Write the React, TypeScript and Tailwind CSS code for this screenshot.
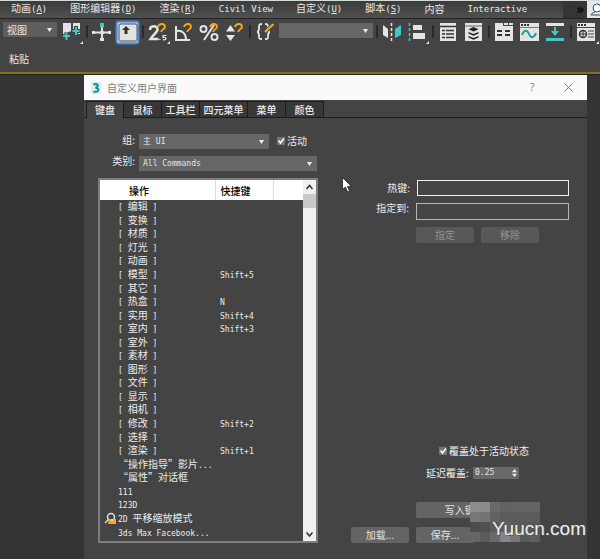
import type { ReactNode } from "react";

const CJK = "font-['Noto_Sans_CJK_SC',sans-serif]";
const MONO = "font-['DejaVu_Sans_Mono','Noto_Sans_CJK_SC',monospace]";

/** Chinese runs keep the surrounding size, Latin runs are set in a smaller monospace. */
function Mixed({ text, large = false }: { text: string; large?: boolean }) {
  const runs = text.split(/([\x20-\x7e]+)/).filter(Boolean);
  return (
    <>
      {runs.map((run, i) =>
        /^[\x20-\x7e]/.test(run) ? (
          <span key={i} className={`${MONO} whitespace-pre ${large ? "text-[9px]" : "text-[8px]"}`}>
            {run}
          </span>
        ) : (
          <span key={i}>{run}</span>
        ),
      )}
    </>
  );
}

const menus: { label: string; key?: string }[] = [
  { label: "动画", key: "A" },
  { label: "图形编辑器", key: "D" },
  { label: "渲染", key: "R" },
  { label: "Civil View" },
  { label: "自定义", key: "U" },
  { label: "脚本", key: "S" },
  { label: "内容" },
  { label: "Interactive" },
];

const commands: [string, string][] = [
  ["[ 编辑 ]", ""],
  ["[ 变换 ]", ""],
  ["[ 材质 ]", ""],
  ["[ 灯光 ]", ""],
  ["[ 动画 ]", ""],
  ["[ 模型 ]", "Shift+5"],
  ["[ 其它 ]", ""],
  ["[ 热盒 ]", "N"],
  ["[ 实用 ]", "Shift+4"],
  ["[ 室内 ]", "Shift+3"],
  ["[ 室外 ]", ""],
  ["[ 素材 ]", ""],
  ["[ 图形 ]", ""],
  ["[ 文件 ]", ""],
  ["[ 显示 ]", ""],
  ["[ 相机 ]", ""],
  ["[ 修改 ]", "Shift+2"],
  ["[ 选择 ]", ""],
  ["[ 渲染 ]", "Shift+1"],
  ["“操作指导”影片...", ""],
  ["“属性”对话框", ""],
  ["111", ""],
  ["123D", ""],
  ["2D 平移缩放模式", ""],
  ["3ds Max Facebook...", ""],
];

function Dropdown({ label, value, className, id }: { label: string; value: string; className: string; id?: string }) {
  return (
    <div className={`relative h-[15px] shrink-0 ${className}`}>
      <select
        id={id}
        aria-label={label}
        className={`block h-full w-full appearance-none bg-[#666] pl-1 text-[8px] leading-[15px] text-[#e6e6e6] outline-none ${MONO}`}
      >
        <option>{value}</option>
      </select>
      <svg className="pointer-events-none absolute top-[6px] right-[5px]" width="5" height="4" viewBox="0 0 5 4">
        <path d="M0 0h5L2.5 4z" fill="#eee" />
      </svg>
    </div>
  );
}

/* Toolbar drawings share one coordinate space; each tool shows its own slice of it. */
function Tool({ from, to, name, children }: { from: number; to: number; name: string; children: ReactNode }) {
  return (
    <button type="button" aria-label={name} className="block shrink-0">
      <svg width={to - from} height="28" viewBox={`${from} 19 ${to - from} 28`}>
        {children}
      </svg>
    </button>
  );
}

const L = "#e4e4e4";
const C = "#3fc8c6";
const O = "#f5a81c";
const Magnet = ({ x, y }: { x: number; y: number }) => (
  <path d={`M${x} ${y + 3}C${x + 1} ${y - 1} ${x + 7} ${y - 1} ${x + 7} ${y + 3}C${x + 7} ${y + 5} ${x + 4} ${y + 5} ${x + 3} ${y + 8}`} fill="none" stroke={O} strokeWidth="1.8" />
);
const Sep = ({ x }: { x: number }) => <path d={`M${x} 25v13`} stroke="#222" strokeWidth="1.5" />;

function Toolbar() {
  return (
    <div className="flex h-[28px] items-center overflow-hidden pl-[3px]">
      <div className="relative mt-[3px] h-[15px] w-[54px] shrink-0 self-start">
        <select aria-label="参考坐标系" className={`block h-full w-full appearance-none bg-[#5e5e5e] pl-1 text-[10px] leading-[15px] text-[#e6e6e6] ${CJK}`}>
          <option>视图</option>
        </select>
        <svg className="pointer-events-none absolute top-[6px] right-[5px]" width="5" height="4" viewBox="0 0 5 4">
          <path d="M0 0h5L2.5 4z" fill="#eee" />
        </svg>
      </div>
      <Tool from={57} to={89} name="轴心">
        <path d="M63 23h8v8l-4 2v4h-4zM73 23h7v11h-3l-4-5z" fill={L} />
        <path d="M66.500 32v8M63 36h7M76 26v9M72 31h8" stroke="#444" strokeWidth="4" />
        <path d="M66.500 32v8M63 36h7M76 27v8M72.500 31h7" stroke={C} strokeWidth="2" />
        <path d="M83 41v3h-3z" fill={L} />
        <Sep x={87} />
      </Tool>
      <Tool from={89} to={114} name="操纵">
        <path d="M102 26v15M93 32.500h18" stroke={L} strokeWidth="2" />
        <path d="M100 23h4v4h-4z" fill={C} />
        <path d="M99 32.500l3-3 3 3-3 3zM92 31h3v3h-3zM108 31h3v3h-3zM100 38h4v3h-4z" fill={L} />
      </Tool>
      <Tool from={114} to={146} name="键盘快捷键覆盖">
        <rect x="116.500" y="21.500" width="22" height="22" rx="2" fill="#bdd2ea" stroke="#4a86cf" strokeWidth="2" />
        <rect x="119" y="24" width="18" height="17" rx="2" fill="#e2e2e2" stroke="#555" />
        <path d="M122 30l4-4 4 4h-2.500v4h-3v-4z" fill="#333" />
        <Sep x={143} />
      </Tool>
      <Tool from={146} to={172} name="捕捉开关">
        <path d="M150 30c0-5 7.500-5 7.500-.5 0 3-5 5.500-7 9.500h8" fill="none" stroke={L} strokeWidth="2.500" />
        <Magnet x={158} y={24} />
        <path d="M159 39.500h1.500M166.500 35.500h-3.500v2c4-1 4 3 0 2.200" fill="none" stroke={L} strokeWidth="1.200" />
        <path d="M170 41v3h-3z" fill={L} />
      </Tool>
      <Tool from={172} to={196} name="角度捕捉">
        <path d="M176 26v14h14M176 31c7-1 10 3 10 9" fill="none" stroke={L} strokeWidth="2" />
        <Magnet x={184} y={24} />
      </Tool>
      <Tool from={196} to={223} name="百分比捕捉">
        <path d="M214 25l-10 15" stroke={L} strokeWidth="2" />
        <circle cx="203.500" cy="29" r="3" fill="none" stroke={L} strokeWidth="2" />
        <circle cx="214.500" cy="37" r="3" fill="none" stroke={L} strokeWidth="2" />
        <Magnet x={210} y={24} />
      </Tool>
      <Tool from={223} to={253} name="微调器捕捉">
        <path d="M230.500 25l4.500 6.500h-9zM230.500 41l4.500-6h-9z" fill={L} />
        <Magnet x={235} y={24} />
        <Sep x={250} />
      </Tool>
      <Tool from={253} to={279} name="编辑命名选择集">
        <path d="M262 24c-3 0-3 1-3 4 0 2 0 4-2 4 2 0 2 2 2 4 0 3 0 3 3 3M265 24c3 0 3 1 3 4 0 2 0 4 2 4-2 0-2 2-2 4 0 3 0 3-3 3" fill="none" stroke={L} strokeWidth="1.800" />
        <path d="M266 31l8-7" stroke="#444" strokeWidth="4" />
        <path d="M265 32l8.500-8" stroke={O} strokeWidth="2.200" />
      </Tool>
      <div className="mt-[4px] self-start">
        <Dropdown label="命名选择集" value="" className="w-[94px]" />
      </div>
      <Tool from={373} to={405} name="镜像">
        <Sep x={377} />
        <path d="M383 25l5 4v9l-5-3z" fill={L} />
        <path d="M391.500 23v18" stroke={L} strokeWidth="1.500" strokeDasharray="3 2" />
        <path d="M401 25l-6 4v9l6-3z" fill={C} />
      </Tool>
      <Tool from={405} to={436} name="对齐">
        <path d="M409.500 23v18" stroke={C} strokeWidth="1.500" strokeDasharray="3 2" />
        <path d="M413 25h9v5h-9zM413 33h12v6h-12z" fill={L} />
        <path d="M429 41v3h-3z" fill={L} />
        <Sep x={433} />
      </Tool>
      <Tool from={436} to={461} name="场景资源管理器">
        <path d="M440 23h16v18h-16z" fill={L} />
        <path d="M440 26.500h16M442 30.500h3M446 30.500h8M442 34h3M446 34h8M442 37.500h3M446 37.500h8" stroke="#333" strokeWidth="1.500" />
      </Tool>
      <Tool from={461} to={492} name="层资源管理器">
        <path d="M465 23h17v18h-17z" fill={L} />
        <path d="M465 26h17" stroke="#666" />
        <path d="M473.500 27l5 2.200-5 2.300-5-2.300zM468.500 32l5 2 5-2v1.500l-5 2.300-5-2.300zM468.500 36l5 2 5-2v1.500l-5 2.300-5-2.300z" fill="#222" />
        <Sep x={489} />
      </Tool>
      <Tool from={492} to={517} name="显示功能区">
        <path d="M495 23h8v3h10v15h-18zM504 23h4v2h-4zM509 23h4v2h-4z" fill={L} />
        <path d="M497 31h5M505 31h5M497 35h5M505 35h5" stroke="#333" strokeWidth="2" />
      </Tool>
      <Tool from={517} to={543} name="曲线编辑器">
        <path d="M520 23h19v18h-19z" fill={L} />
        <path d="M521 25h8" stroke="#333" strokeWidth="2" strokeDasharray="2 1" />
        <path d="M520 27.500h19" stroke="#777" />
        <path d="M522 35c2-5 5-6 7-1s5 4 7-1" fill="none" stroke="#229b9b" strokeWidth="2" />
      </Tool>
      <Tool from={543} to={574} name="图解视图">
        <path d="M546 23h18v3h-18z" fill={L} />
        <path d="M546 38h18v3h-18zM554 27h2v4h3l-4 5-4-5h3z" fill={C} />
        <Sep x={571} />
      </Tool>
      <Tool from={574} to={600} name="渲染设置">
        <path d="M577 23h18v18h-18z" fill={L} />
        <path d="M578 25h8" stroke="#333" strokeWidth="2" strokeDasharray="2 1" />
        <path d="M577 27.500h18M588 31h6M588 34h6M588 37h6" stroke="#444" />
        <circle cx="583" cy="34" r="3.500" fill="none" stroke="#333" strokeWidth="1.500" />
        <path d="M583 30v8M579 34h8" stroke="#333" />
        <path d="M599 41v3h-3z" fill={L} />
      </Tool>
    </div>
  );
}

function CheckBox({ text }: { text: string }) {
  return (
    <label className="relative flex items-center gap-[2px] text-[10px] leading-[14px] whitespace-nowrap">
      <input type="checkbox" defaultChecked className="size-[8px] appearance-none bg-[#757575]" />
      <svg className="pointer-events-none absolute top-[3px] left-0" width="8" height="8" viewBox="0 0 8 8">
        <path d="M1.500 3.500L3.500 6L7 1.500" fill="none" stroke="#fff" strokeWidth="1.500" />
      </svg>
      {text}
    </label>
  );
}

function PushButton({ children, disabled = false, wide = false }: { children: ReactNode; disabled?: boolean; wide?: boolean }) {
  return (
    <button
      type="button"
      disabled={disabled}
      className={`h-[16px] shrink-0 rounded-[2px] text-[10px] leading-[16px] ${wide ? "w-[124px] pr-[18px]" : "w-[58px]"} ${disabled ? "bg-[#585858] text-[#929292]" : "bg-[#646464] text-[#e2e2e2]"}`}
    >
      {children}
    </button>
  );
}

function CommandList() {
  return (
    <div className="flex h-[365px] w-[220px] items-start border-2 border-[#7c7e82]">
      <table className="h-[359px] flex-1 table-fixed border-collapse text-left text-[10px] whitespace-nowrap">
        <colgroup>
          <col />
          <col className="w-[58px]" />
          <col className="w-[30px]" />
        </colgroup>
        <thead>
          <tr className="h-[20px] bg-white leading-[13px] text-black">
            <th className="border-r border-[#ddd] py-0 pl-[29px] font-medium">操作</th>
            <th className="border-r border-[#ddd] py-0 pl-[5px] font-medium">快捷键</th>
            <th aria-label="图标" className="p-0" />
          </tr>
        </thead>
        <tbody className="leading-[11px]">
          {commands.map(([name, key]) => (
            <tr key={name}>
              <td className="relative p-0 pl-[18px]">
                {name.startsWith("2D") && (
                  <svg className="absolute top-0 left-[4px]" width="14" height="13" viewBox="0 0 14 13">
                    <circle cx="7" cy="5" r="3.500" fill="none" stroke="#ddd" strokeWidth="1.500" />
                    <path d="M1 11l4-4" stroke="#ddd" strokeWidth="1.500" />
                    <path d="M5 7h7v5H4z" fill={O} />
                    <path d="M8 7v2" stroke="#fff" />
                  </svg>
                )}
                <div className="h-[13px]">
                  <Mixed text={name} />
                </div>
              </td>
              <td className="p-0 pl-[5px]">
                <div className="h-[13px]">
                  <Mixed text={key} />
                </div>
              </td>
              <td className="p-0" />
            </tr>
          ))}
        </tbody>
      </table>
      <div className="flex w-[13px] flex-col items-center self-stretch bg-[#f0f0f0]">
        <svg width="13" height="14" viewBox="0 0 13 14">
          <path d="M3.500 9l3-3.500L9.500 9" fill="none" stroke="#333" strokeWidth="1.500" />
        </svg>
        <div className="h-[14px] w-full bg-[#c9c9c9]" />
        <svg className="mt-auto" width="13" height="14" viewBox="0 0 13 14">
          <path d="M3.500 5.500l3 3.500 3-3.500" fill="none" stroke="#333" strokeWidth="1.500" />
        </svg>
      </div>
    </div>
  );
}

const mosaic = [
  "bg-[#8d8d8d]", "bg-[#8b8b8b]", "bg-[#696969]", "bg-[#626262]", "bg-[#646464]", "bg-[#646464]", "bg-[#646464]",
  "bg-[#777]", "bg-[#747474]", "bg-[#626262]", "bg-[#5c5c5c]", "bg-[#5c5c5c]", "bg-[#5c5c5c]", "bg-[#5c5c5c]",
  "bg-[#4c4c4c]", "bg-[#505050]", "bg-[#5b5b5b]", "bg-[#606060]", "bg-[#5b5b5b]", "bg-[#585858]", "bg-[#555]",
  "bg-[#666]", "bg-[#5b5b5b]", "bg-[#696969]", "bg-[#858585]", "bg-[#777]", "bg-[#5a5a5a]", "bg-[#5e5e5e]",
];

function Dialog() {
  return (
    <section aria-label="自定义用户界面" className="relative flex flex-1 flex-col bg-[#444] text-[#ececec]">
      <header className="flex h-[25px] items-center bg-[#fafafa] pr-[14px] pl-[7px] text-[10px] text-[#7d7d7d]">
        <svg width="10" height="12" viewBox="0 0 10 12">
          <path d="M0 0h10v12H0z" fill="#d5eeee" />
          <path d="M2.500 2.500C7 1 8.500 4.500 4.500 5.700C9 6 8 11 2.500 9.500" fill="none" stroke="#108b91" strokeWidth="2" />
        </svg>
        <h1 className="ml-[6px] flex-1 leading-[12px]">自定义用户界面</h1>
        <button type="button" aria-label="帮助" className="w-[10px] font-['Open_Sans',sans-serif] text-[11px]">?</button>
        <button type="button" aria-label="关闭" className="ml-[27px]">
          <svg width="9" height="9" viewBox="0 0 9 9">
            <path d="M.5.5l8 8M8.500.5l-8 8" stroke="#777" />
          </svg>
        </button>
      </header>
      <div role="tablist" className="flex h-[18px] items-end border-b border-[#1c1c1c] pl-[2px] text-[10px] leading-[14px] font-medium">
        {["键盘", "鼠标", "工具栏", "四元菜单", "菜单", "颜色"].map((tab, i) => (
          <button
            key={tab}
            type="button"
            role="tab"
            aria-selected={i === 0}
            className={`border-t border-r border-[#1c1c1c] ${i === 0 ? "-mb-px h-[17px] border-l bg-[#444]" : "h-[16px] bg-[#383838]"} ${tab.length === 4 ? "w-[48px]" : "w-[38px]"}`}
          >
            {tab}
          </button>
        ))}
      </div>
      <div className="flex flex-1 justify-between pr-[18px] pl-[14px]">
        <div className="flex flex-col pt-[16px] text-[10px] leading-[15px]">
          <div className="flex items-start">
            <label htmlFor="group" className="w-[41px] pr-[4px] text-right leading-[12px]">组:</label>
            <Dropdown id="group" label="组" value="主 UI" className="mr-[8px] w-[130px]" />
            <CheckBox text="活动" />
          </div>
          <div className="mt-[7px] mb-[7px] flex">
            <label htmlFor="category" className="w-[41px] pr-[4px] text-right leading-[10px]">类别:</label>
            <Dropdown id="category" label="类别" value="All Commands" className="w-[178px]" />
          </div>
          <CommandList />
        </div>
        <div className="flex w-[218px] flex-col pt-[62px] text-[10px] leading-[16px]">
          <div className="flex items-center justify-end gap-[7px]">
            <label htmlFor="hotkey">热键:</label>
            <input id="hotkey" className="h-[16px] w-[152px] border border-[#ececec] bg-[#444]" />
          </div>
          <div className="mt-[7px] flex justify-end gap-[7px]">
            <label htmlFor="assigned" className="-mt-[3px]">指定到:</label>
            <input id="assigned" readOnly className="h-[17px] w-[153px] border border-[#b5b5b5] bg-[#444]" />
          </div>
          <div className="mt-[7px] flex gap-[7px] pl-[65px]">
            <PushButton disabled>指定</PushButton>
            <PushButton disabled>移除</PushButton>
          </div>
          <div className="mt-auto flex flex-col pb-[16px]">
            <div className="pl-[88px]">
              <CheckBox text="覆盖处于活动状态" />
            </div>
            <div className="mt-[8px] flex items-center gap-[4px] pl-[75px] leading-[13px]">
              <label htmlFor="delay" className="w-[43px] whitespace-nowrap">延迟覆盖:</label>
              <div className="relative">
                <input id="delay" defaultValue="0.25" className={`block h-[12px] w-[46px] bg-[#696969] pl-[2px] text-[8px] text-[#e6e6e6] ${MONO}`} />
                <svg className="pointer-events-none absolute top-[2px] right-[2px]" width="5" height="8" viewBox="0 0 5 8">
                  <path d="M0 3.200h5L2.500 0zM0 4.800h5L2.500 8z" fill="#eee" />
                </svg>
              </div>
            </div>
            <div className="relative mt-[23px]">
              <div className="pl-[65px]">
                <PushButton wide>写入键盘...</PushButton>
              </div>
              <div className="mt-[9px] flex gap-[7px]">
                <PushButton>加载...</PushButton>
                <PushButton>保存...</PushButton>
              </div>
              <div aria-hidden="true" className="absolute top-0 left-[119px] grid w-[70px] grid-cols-7">
                {mosaic.map((shade, i) => (
                  <div key={i} className={`h-[10px] ${shade}`} />
                ))}
              </div>
              <p className="absolute top-[16px] left-[141px] font-['Liberation_Sans',sans-serif] text-[19px] leading-[22px] text-[#eee] [text-shadow:1px_1px_0_#555]">
                Yuucn.com
              </p>
            </div>
          </div>
        </div>
      </div>
      <svg className="pointer-events-none absolute top-[102px] left-[258px]" width="10" height="16" viewBox="0 0 10 16">
        <path d="M.5.5v12l3-2.500 2 5 2-1-2-4.500h4z" fill="#fff" stroke="#111" strokeWidth=".7" />
      </svg>
    </section>
  );
}

export default function App() {
  return (
    <div className={`flex min-h-screen flex-col overflow-hidden bg-[#343434] text-[#e8e8e8] ${CJK}`}>
      <nav className="flex h-[19px] items-center border-t border-b border-t-[#d5ddd8] border-b-[#242424] bg-linear-to-b from-[#3b3b3b] to-[#505050] pl-[11px] text-[10px] leading-[14px] whitespace-nowrap">
        <div className="flex flex-1 gap-[23px] pb-[2px]">
          {menus.map(({ label, key }) => (
            <button key={label} type="button">
              <Mixed text={label} large />
              {key && (
                <span className={`${MONO} text-[9px]`}>
                  (<u>{key}</u>)
                </span>
              )}
            </button>
          ))}
        </div>
        <button type="button" aria-label="更多" className="flex h-full w-[24px] items-center bg-[#353535] pl-[14px]">
          <svg width="7" height="6" viewBox="0 0 7 6">
            <path d="M.5.5L3 3 .5 5.500M3.500.5L6 3 3.500 5.500" fill="none" stroke="#000" strokeWidth="1.300" />
          </svg>
        </button>
        <svg className="shrink-0" width="13" height="17" viewBox="0 0 13 17">
          <path d="M0 0h13v17H0z" fill="#e6e6e6" />
          <circle cx="10" cy="7" r="4" fill="#fff" stroke="#36536d" />
          <path d="M4 14c1-3 4-2 5-4M4 14h9" fill="none" stroke="#36536d" />
        </svg>
      </nav>
      <div className="h-[53px] shrink-0 bg-[#444]">
        <Toolbar />
        <button type="button" className="mt-[5px] ml-[9px] block text-[10px] leading-[14px]">粘贴</button>
      </div>
      <div className="h-[3px] shrink-0 border-b border-[#222] bg-[#8a6d1a]" />
      <main className="flex flex-1 pr-[13px] pl-[84px]">
        <Dialog />
      </main>
    </div>
  );
}
